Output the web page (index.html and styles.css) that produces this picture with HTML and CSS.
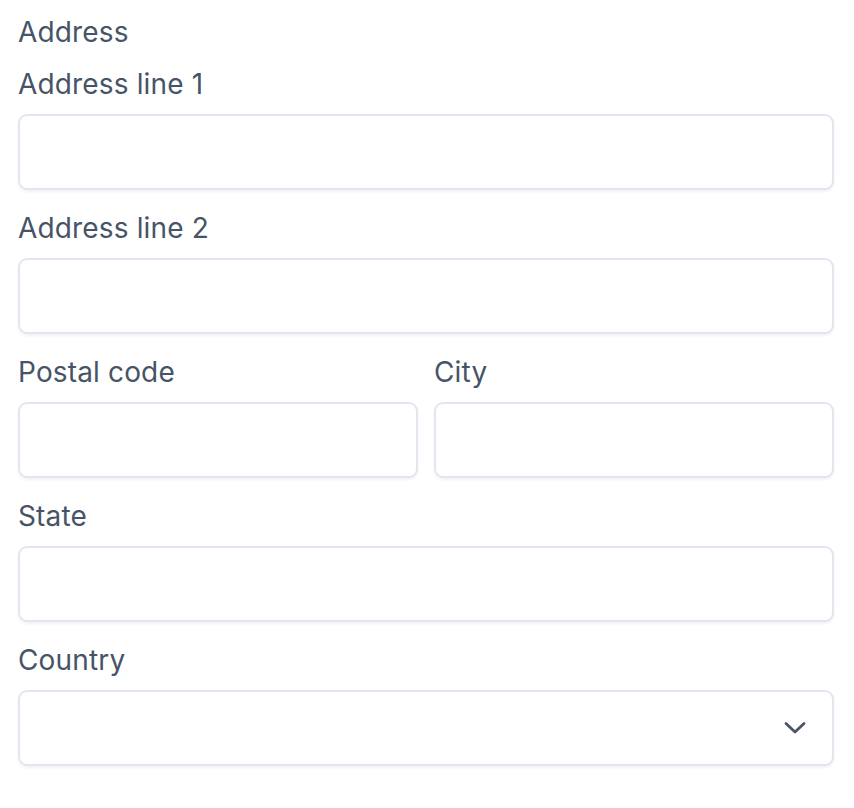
FILE: index.html
```html
<!DOCTYPE html>
<html>
<head>
<meta charset="utf-8">
<link rel="stylesheet" href="styles.css">
</head>
<body>
<form class="form">
  <div class="heading">Address</div>
  <div class="field">
    <label class="label">Address line 1</label>
    <input class="input" type="text">
  </div>
  <div class="field">
    <label class="label">Address line 2</label>
    <input class="input" type="text">
  </div>
  <div class="row">
    <div class="field">
      <label class="label">Postal code</label>
      <input class="input" type="text">
    </div>
    <div class="field">
      <label class="label">City</label>
      <input class="input" type="text">
    </div>
  </div>
  <div class="field">
    <label class="label">State</label>
    <input class="input" type="text">
  </div>
  <div class="field">
    <label class="label">Country</label>
    <div class="select">
      <svg class="chevron" width="22" height="14" viewBox="0 0 22 14"><path d="M2 2.5 L11 11 L20 2.5" fill="none" stroke="#4b5567" stroke-width="2.8" stroke-linecap="round" stroke-linejoin="round"/></svg>
    </div>
  </div>
</form>
</body>
</html>
```
FILE: styles.css
```css
* { box-sizing: border-box; }
html, body { margin: 0; padding: 0; background: #fff; }
body {
  font-family: Inter, "Noto Sans", sans-serif;
  font-size: 28px;
  line-height: 40px;
  letter-spacing: 0.15px;
  color: #475467;
}
.form {
  padding: 12px 20px 0 18px;
  display: flex;
  flex-direction: column;
}
.heading { margin-bottom: 12px; }
.field {
  display: flex;
  flex-direction: column;
  margin-bottom: 18px;
}
.label {
  display: block;
  margin-bottom: 10px;
}
.input, .select {
  height: 76px;
  width: 100%;
  border: 2px solid #e3e6ee;
  border-radius: 9px;
  background: #fff;
  box-shadow: 0 2px 3px rgba(16, 24, 40, 0.05);
  font: inherit;
  outline: none;
}
.row {
  display: grid;
  grid-template-columns: 1fr 1fr;
  column-gap: 16px;
}
.select {
  display: flex;
  align-items: center;
  justify-content: flex-end;
  padding-right: 26px;
}
.chevron { display: block; }
```
